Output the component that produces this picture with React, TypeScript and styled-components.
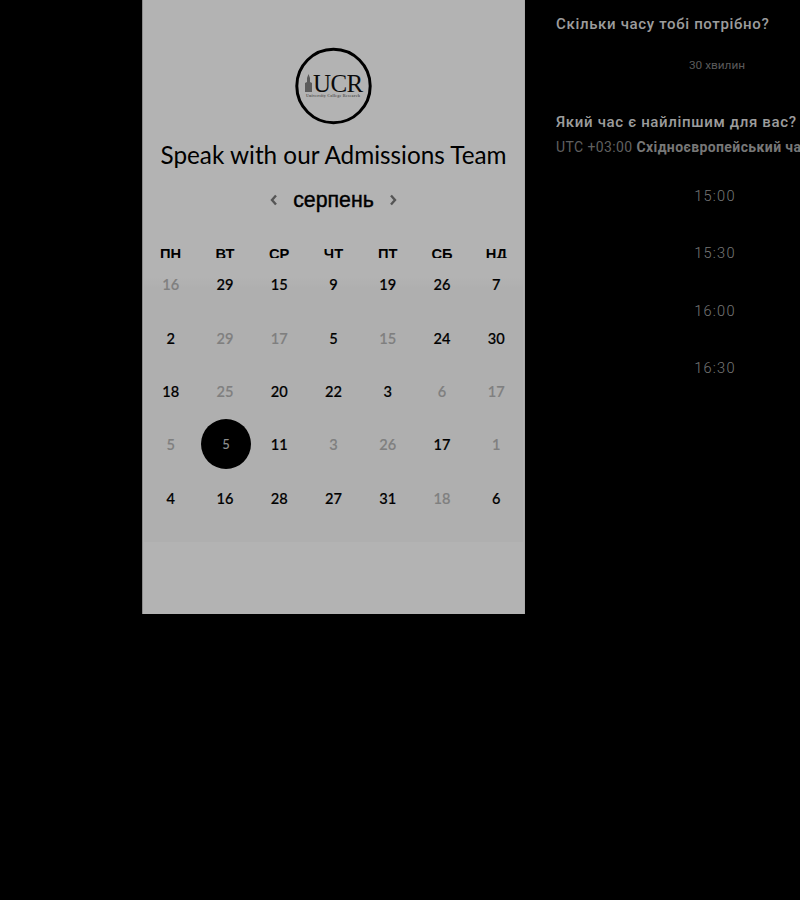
import React from 'react'
import styled, { createGlobalStyle } from 'styled-components'

const GlobalStyle = createGlobalStyle`
  html, body {
    margin: 0;
    padding: 0;
    height: 100%;
    background: #000;
    overflow: hidden;
  }
`

const Page = styled.div`
  display: flex;
  align-items: flex-start;
  gap: 31px;
  width: 800px;
  height: 900px;
  padding-left: 142px;
  box-sizing: border-box;
  background: #000;
  overflow: hidden;
`

// the whole page sits under a dimming overlay, so panels carry the opacity
const Panel = styled.section`
  flex: 0 0 383px;
  height: 614px;
  box-sizing: border-box;
  display: flex;
  flex-direction: column;
  align-items: center;
  padding-top: 47px;
  background: #fff;
  opacity: 0.7;
  border-left: 1px solid #c8c8c8;
  border-right: 1px solid #f4f4f4;
`

const Logo = styled.svg`
  display: block;
  width: 77px;
  height: 78px;
`

const Title = styled.h1`
  margin: 14px 0 0;
  font-family: Lato, "Noto Sans", sans-serif;
  font-size: 24.3px;
  line-height: 32px;
  font-weight: 400;
  color: #000;
  white-space: nowrap;
`

const MonthRow = styled.div`
  display: flex;
  align-items: center;
  justify-content: center;
  gap: 14px;
  margin-top: 14px;
  height: 30px;
  color: #000;
`

const Arrow = styled.svg`
  display: block;
  width: 10px;
  height: 14px;
`

const MonthName = styled.span`
  font-family: "Liberation Sans", Arial, sans-serif;
  font-size: 21.3px;
  font-weight: 400;
  -webkit-text-stroke: 0.4px #000;
`

const Grid = styled.div`
  display: grid;
  grid-template-columns: repeat(7, 1fr);
  width: 380px;
  margin-top: 31px;
`

const DayHead = styled.div`
  height: 12px;
  display: flex;
  align-items: flex-start;
  justify-content: center;
  font-family: "Liberation Sans", Arial, sans-serif;
  font-size: 14.7px;
  line-height: 16px;
  font-weight: 700;
  color: #000;
`

const Days = styled.div`
  grid-column: 1 / -1;
  display: grid;
  grid-template-columns: repeat(7, 1fr);
  grid-auto-rows: 53.4px;
  padding-bottom: 17px;
  background: linear-gradient(#fff, #fff 20px, #fafafa 30px);
`

const Cell = styled.div<{ $muted?: boolean }>`
  display: flex;
  align-items: center;
  justify-content: center;
  font-family: Lato, "Noto Sans", sans-serif;
  font-size: 14.6px;
  font-weight: 500;
  -webkit-text-stroke: 0.2px currentColor;
  color: ${(p) => (p.$muted ? '#b5b5b5' : '#000')};
`

const Selected = styled.span`
  width: 50px;
  height: 50px;
  margin: -2px 0 0 2px;
  border-radius: 50%;
  background: #000;
  color: #ccc;
  font-size: 13px;
  -webkit-text-stroke: 0;
  display: flex;
  align-items: center;
  justify-content: center;
`

const Side = styled.aside`
  flex: 0 0 auto;
  width: 244px;
  white-space: nowrap;
  padding-top: 15px;
  font-family: Roboto, "Liberation Sans", sans-serif;
  opacity: 0.7;
`

const Question = styled.h2`
  margin: 0;
  font-size: 15px;
  line-height: 18px;
  font-weight: 500;
  letter-spacing: 0.66px;
  color: #dfdfdf;
`

const Duration = styled.div`
  margin-top: 24px;
  margin-bottom: 40px;
  text-align: center;
  padding-left: 77px;
  width: 168px;
  font-size: 11.8px;
  line-height: 16px;
  font-weight: 400;
  color: #808080;
`

const Zone = styled.div`
  margin-top: 7px;
  font-size: 14px;
  line-height: 18px;
  letter-spacing: 0.4px;
  font-weight: 400;
  color: #888;

  b {
    font-weight: 700;
    color: #aaa;
  }
`

const Slots = styled.div`
  margin-top: 28px;
  display: grid;
  grid-auto-rows: 57.3px;
  justify-items: center;
  width: 318px;
`

const Slot = styled.div`
  font-size: 14.6px;
  line-height: 24px;
  font-weight: 300;
  letter-spacing: 1.2px;
  color: #a8a8a8;
`

const heads = ['ПН', 'ВТ', 'СР', 'ЧТ', 'ПТ', 'СБ', 'НД']

// value, muted
const days: [number, boolean][] = [
  [16, true], [29, false], [15, false], [9, false], [19, false], [26, false], [7, false],
  [2, false], [29, true], [17, true], [5, false], [15, true], [24, false], [30, false],
  [18, false], [25, true], [20, false], [22, false], [3, false], [6, true], [17, true],
  [5, true], [5, false], [11, false], [3, true], [26, true], [17, false], [1, true],
  [4, false], [16, false], [28, false], [27, false], [31, false], [18, true], [6, false],
]

const SELECTED_INDEX = 22

const slots = ['15:00', '15:30', '16:00', '16:30']

export default function App() {
  return (
    <Page>
      <GlobalStyle />
      <Panel>
        <Logo viewBox="0 0 77 78">
          <circle cx="38.5" cy="39" r="36.7" fill="none" stroke="#000" strokeWidth="3" />
          <path d="M10 45V36l2-1v-4l1.500-4 1.500 4v4l2 1v9z" fill="#848484" />
          <text x="18" y="45" fontFamily="'Liberation Serif', serif" fontSize="25" letterSpacing="-0.6" fill="#111">UCR</text>
          <text x="11" y="50" fontFamily="'Liberation Serif', serif" fontSize="4" fontWeight="700" textLength="54" fill="#848484">University College Research</text>
        </Logo>
        <Title>Speak with our Admissions Team</Title>
        <MonthRow>
          <Arrow viewBox="0 0 10 14">
            <path d="M7 2.500 3 7l4 4.500" fill="none" stroke="#7a7a7a" strokeWidth="2.400" />
          </Arrow>
          <MonthName>серпень</MonthName>
          <Arrow viewBox="0 0 10 14">
            <path d="M3 2.500 7 7l-4 4.500" fill="none" stroke="#7a7a7a" strokeWidth="2.400" />
          </Arrow>
        </MonthRow>
        <Grid>
          {heads.map((h) => (
            <DayHead key={h}>{h}</DayHead>
          ))}
          <Days>
            {days.map(([value, muted], i) => (
              <Cell key={i} $muted={muted}>
                {i === SELECTED_INDEX ? <Selected>{value}</Selected> : value}
              </Cell>
            ))}
          </Days>
        </Grid>
      </Panel>
      <Side>
        <Question>Скільки часу тобі потрібно?</Question>
        <Duration>30 хвилин</Duration>
        <Question>Який час є найліпшим для вас?</Question>
        <Zone>
          UTC +03:00 <b>Східноєвропейський час</b>
        </Zone>
        <Slots>
          {slots.map((s) => (
            <Slot key={s}>{s}</Slot>
          ))}
        </Slots>
      </Side>
    </Page>
  )
}
